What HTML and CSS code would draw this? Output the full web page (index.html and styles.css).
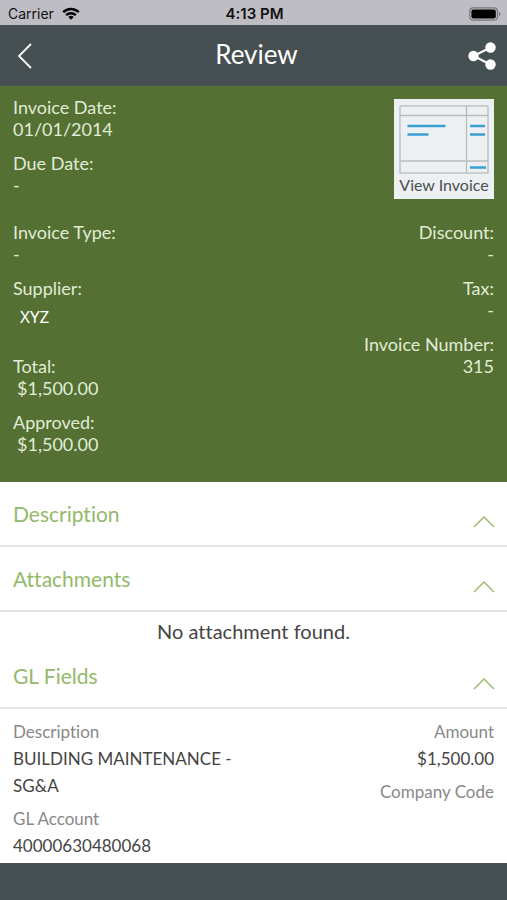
FILE: index.html
```html
<!DOCTYPE html>
<html lang="en">
<head>
<meta charset="utf-8">
<meta name="viewport" content="width=device-width, initial-scale=1">
<title>Review</title>
<link rel="stylesheet" href="styles.css">
</head>
<body>
<div class="status">
  <div class="carrier"><span>Carrier</span>
    <svg width="18" height="13" viewBox="0 0 18 13" aria-hidden="true"><g fill="none" stroke="#000" stroke-width="2.4"><path d="M1.2 5.2a11 11 0 0 1 15.6 0"/><path d="M4.1 8.2a7 7 0 0 1 9.8 0"/></g><path d="M9 12.8 6.3 10.1a3.8 3.8 0 0 1 5.4 0z"/></svg>
  </div>
  <div class="clock">4:13 PM</div>
  <div class="battery">
    <svg width="32" height="14" viewBox="0 0 32 14" aria-hidden="true"><rect x=".8" y=".8" width="27.6" height="12.4" rx="3.5" fill="none" stroke="#77767c" stroke-width="1.2"/><rect x="2.4" y="2.4" width="24.4" height="9.2" rx="2"/><path d="M29.8 5q1.8.5 1.8 2t-1.8 2z" fill="#77767c"/></svg>
  </div>
</div>
<header class="bar">
  <button class="icon-btn" type="button" aria-label="Back"><svg width="16" height="26" viewBox="0 0 16 26"><path d="M14 1 2 13l12 12" fill="none" stroke="#fff" stroke-width="1.8"/></svg></button>
  <h1>Review</h1>
  <button class="icon-btn share" type="button" aria-label="Share"><svg width="28" height="28" viewBox="0 0 28 28" fill="#fff"><path d="M22.5 5.5 5.5 14l17 8.5" fill="none" stroke="#fff" stroke-width="2"/><circle cx="5.5" cy="14" r="5.2"/><circle cx="22.5" cy="5.5" r="5.2"/><circle cx="22.5" cy="22.5" r="5.2"/></svg></button>
</header>
<main>
  <section class="summary">
    <div class="columns">
      <dl>
        <div><dt>Invoice Date:</dt><dd>01/01/2014</dd></div>
        <div><dt>Due Date:</dt><dd>-</dd></div>
      </dl>
      <button class="thumb" type="button">
        <svg width="90" height="70" viewBox="0 0 90 70" aria-hidden="true"><g fill="none" stroke="#b9bcbd" stroke-width="1.3"><rect x="1" y="1" width="88" height="67"/><path d="M1 10.5h88M1 56h88M67.500 1v67"/></g><path d="M8.500 21h38M8.500 29.500h21M71 21h15M71 29.500h15M71 62.500h16" stroke="#3b9fd0" stroke-width="2.500"/></svg>
        <span>View Invoice</span>
      </button>
    </div>
    <div class="columns">
      <dl>
        <div><dt>Invoice Type:</dt><dd>-</dd></div>
        <div class="supplier"><dt>Supplier:</dt><dd>XYZ</dd></div>
        <div class="money"><dt>Total:</dt><dd>$1,500.00</dd></div>
        <div class="money"><dt>Approved:</dt><dd>$1,500.00</dd></div>
      </dl>
      <dl class="right">
        <div><dt>Discount:</dt><dd>-</dd></div>
        <div><dt>Tax:</dt><dd>-</dd></div>
        <div><dt>Invoice Number:</dt><dd>315</dd></div>
      </dl>
    </div>
  </section>
  <section>
    <h2><button class="fold" type="button"><span>Description</span><svg width="22" height="12" viewBox="0 0 22 12" aria-hidden="true"><path d="M1 11 11 1l10 10"/></svg></button></h2>
  </section>
  <section>
    <h2><button class="fold" type="button"><span>Attachments</span><svg width="22" height="12" viewBox="0 0 22 12" aria-hidden="true"><path d="M1 11 11 1l10 10"/></svg></button></h2>
    <p class="empty">No attachment found.</p>
  </section>
  <section>
    <h2><button class="fold" type="button"><span>GL Fields</span><svg width="22" height="12" viewBox="0 0 22 12" aria-hidden="true"><path d="M1 11 11 1l10 10"/></svg></button></h2>
    <div class="columns gl">
      <dl>
        <div><dt>Description</dt><dd>BUILDING MAINTENANCE - SG&amp;A</dd></div>
        <div><dt>GL Account</dt><dd>40000630480068</dd></div>
      </dl>
      <dl class="right">
        <div><dt>Amount</dt><dd>$1,500.00</dd></div>
        <div><dt>Company Code</dt></div>
      </dl>
    </div>
  </section>
</main>
<footer></footer>
</body>
</html>
```
FILE: styles.css
```css
* { box-sizing: border-box; margin: 0; padding: 0; }

body {
  min-height: 100vh;
  display: flex;
  flex-direction: column;
  background: #fff;
  color: #444;
  font-family: Lato, "Open Sans", sans-serif;
  font-size: 18px;
  line-height: 22px;
  font-variant-ligatures: none;
}

button { border: 0; background: none; font: inherit; cursor: pointer; }
svg { display: block; }

.status {
  height: 25px;
  padding: 2px 6px 0 8px;
  display: grid;
  grid-template-columns: 1fr auto 1fr;
  align-items: center;
  background: #bfbdc4;
  color: #111;
  font-family: Inter, sans-serif;
  font-size: 14px;
}
.carrier { display: flex; align-items: center; gap: 8px; }
.clock { font-size: 15px; font-weight: 600; }
.battery { justify-self: end; }

.bar {
  height: 61px;
  padding: 0 11px 0 17px;
  display: grid;
  grid-template-columns: 1fr auto 1fr;
  align-items: center;
  background: #464f51;
  color: #fff;
}
.bar h1 { padding-bottom: 4px; font-size: 26px; line-height: 30px; font-weight: 400; }
.icon-btn { justify-self: start; }
.share { justify-self: end; }

.summary {
  padding: 10px 13px 27px;
  display: grid;
  gap: 25px;
  background: #547033;
  color: #e0ecd5;
}
.columns { display: flex; justify-content: space-between; align-items: flex-start; }
dl { display: grid; gap: 12px; }
.right { text-align: right; }
.supplier { padding-bottom: 8px; }
.supplier dd { padding-left: 7px; font-family: "Noto Sans", sans-serif; line-height: 36px; color: #fff; font-size: 17px; }
.money dd { padding-left: 4px; }

.thumb {
  width: 100px;
  margin: 3px 0 -3px;
  padding: 6px 0 4px;
  display: grid;
  justify-items: center;
  background: #ecf0f3;
  color: #4a4f52;
  font-size: 16px;
  line-height: 20px;
}

h2 { font-size: 21px; font-weight: 400; }
.fold {
  width: 100%;
  height: 65px;
  padding: 0 12px 0 13px;
  display: flex;
  justify-content: space-between;
  align-items: center;
  border-bottom: 2px solid #e4e4e4;
  color: #93b96a;
}
.fold svg { margin-top: 16px; fill: none; stroke: #a3bf7c; stroke-width: 1.6; }
.empty { padding: 8px 0 2px; text-align: center; font-size: 20px; }

.gl { padding: 9px 13px 4px; font-size: 17px; }
.gl dl { gap: 6px; max-width: 240px; }
.gl dt { line-height: 27px; color: #888; }
.gl dd { line-height: 27px; }

footer { flex: 1; min-height: 36px; background: #464f51; }
```
